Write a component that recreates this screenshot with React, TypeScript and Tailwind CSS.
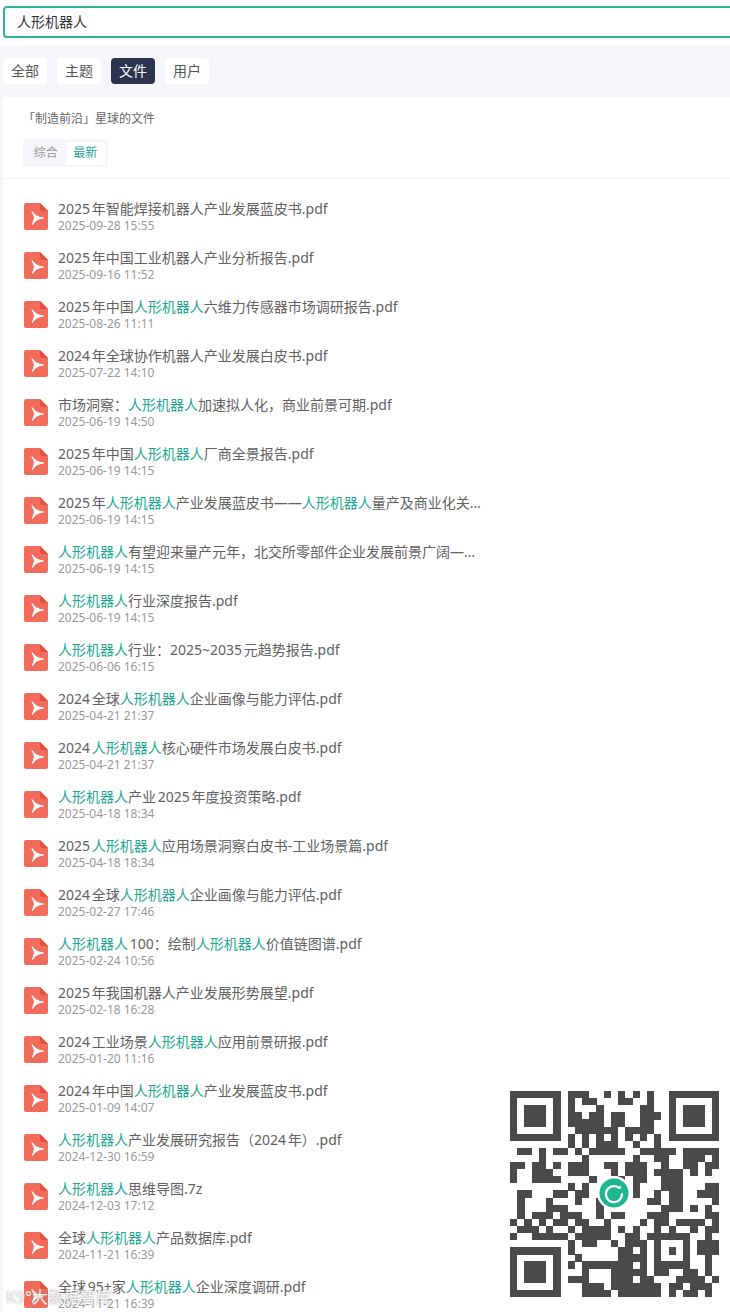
import React from 'react';

const KEYWORD = '人形机器人';

const files = [
  ['2025年智能焊接机器人产业发展蓝皮书.pdf', '2025-09-28 15:55'],
  ['2025年中国工业机器人产业分析报告.pdf', '2025-09-16 11:52'],
  ['2025年中国人形机器人六维力传感器市场调研报告.pdf', '2025-08-26 11:11'],
  ['2024年全球协作机器人产业发展白皮书.pdf', '2025-07-22 14:10'],
  ['市场洞察：人形机器人加速拟人化，商业前景可期.pdf', '2025-06-19 14:50'],
  ['2025年中国人形机器人厂商全景报告.pdf', '2025-06-19 14:15'],
  ['2025年人形机器人产业发展蓝皮书——人形机器人量产及商业化关键挑战.pdf', '2025-06-19 14:15'],
  ['人形机器人有望迎来量产元年，北交所零部件企业发展前景广阔——行业报告.pdf', '2025-06-19 14:15'],
  ['人形机器人行业深度报告.pdf', '2025-06-19 14:15'],
  ['人形机器人行业：2025~2035元趋势报告.pdf', '2025-06-06 16:15'],
  ['2024全球人形机器人企业画像与能力评估.pdf', '2025-04-21 21:37'],
  ['2024人形机器人核心硬件市场发展白皮书.pdf', '2025-04-21 21:37'],
  ['人形机器人产业2025年度投资策略.pdf', '2025-04-18 18:34'],
  ['2025人形机器人应用场景洞察白皮书-工业场景篇.pdf', '2025-04-18 18:34'],
  ['2024全球人形机器人企业画像与能力评估.pdf', '2025-02-27 17:46'],
  ['人形机器人100：绘制人形机器人价值链图谱.pdf', '2025-02-24 10:56'],
  ['2025年我国机器人产业发展形势展望.pdf', '2025-02-18 16:28'],
  ['2024工业场景人形机器人应用前景研报.pdf', '2025-01-20 11:16'],
  ['2024年中国人形机器人产业发展蓝皮书.pdf', '2025-01-09 14:07'],
  ['人形机器人产业发展研究报告（2024年）.pdf', '2024-12-30 16:59'],
  ['人形机器人思维导图.7z', '2024-12-03 17:12'],
  ['全球人形机器人产品数据库.pdf', '2024-11-21 16:39'],
  ['全球95+家人形机器人企业深度调研.pdf', '2024-11-21 16:39'],
];

const QR_ROWS = [
  '#######.###..#.#.#.#..#######',
  '#.....#.#.##...##..#..#.....#',
  '#.###.#.#...#.....##..#.###.#',
  '#.###.#.##.##.##..###.#.###.#',
  '#.###.#.#####.##..##..#.###.#',
  '#.....#..######.####..#.....#',
  '#######.#.#.#.#.#.#.#.#######',
  '........#.#.###..#..#........',
  '.##.#.##.#.#####..#####.#####',
  '....#.....#......#..##..###.#',
  '##.##.#.###..##.###..#..##.##',
  '#..###..###...#.###.####.#.#.',
  '#..####....#...#.##..###.....',
  '........#.#......#...###...##',
  '.##...##.##......#..#.##..###',
  '.#...#...#..#......##.##....#',
  '.#...###....#........###.#.#.',
  '.#.###.###..#.##...###.....##',
  '#.#.#.##.##..#....#.##.####.#',
  '.###.#..#.####.#.#..#.#..#.##',
  '#..#####.#####..##.######..#.',
  '........#.##..#.###.#...#.###',
  '#######.#......##.#.#.#.#.###',
  '#.....#..#.....####.#...#..#.',
  '#.###.#.#.#######.#.#####..#.',
  '#.###.#...#...#####.##..##.#.',
  '#.###.#.###...###.##...####.#',
  '#.....#...###.#######.##.###.',
  '#######...####.######.#.##.#.',
];

function PdfIcon() {
  return (
    <svg width="24" height="27" viewBox="0 0 24 27" className="shrink-0">
      <path d="M2 0H16L24 8V25a2 2 0 0 1-2 2H2a2 2 0 0 1-2-2V2a2 2 0 0 1 2-2Z" fill="#f36b5b" />
      <path d="M16 0L24 8H18a2 2 0 0 1-2-2Z" fill="#e2523f" />
      <path
        d="M8 8.5C9.5 12 10 13 10.5 15C10 17 9 19 8.5 21.5C10.5 18.5 13 16 19.5 15C14 14.5 10.5 12 8 8.5Z"
        fill="#fff"
        stroke="#fff"
        strokeWidth="1"
        strokeLinejoin="round"
      />
    </svg>
  );
}

function Title({ text }: { text: string }) {
  const parts = text.split(KEYWORD);
  return (
    <div className="max-w-[424px] truncate text-sm leading-5 text-[#616161] [text-autospace:normal]">
      {parts.map((part, i) => (
        <React.Fragment key={i}>
          {i > 0 && <span className="text-[#22a98f]">{KEYWORD}</span>}
          {part}
        </React.Fragment>
      ))}
    </div>
  );
}

function QrCode() {
  return (
    <div className="absolute left-[510px] top-[1091px] h-[206px] w-[209px]">
      <svg width="209" height="206" viewBox="0 0 29 29" preserveAspectRatio="none" shapeRendering="crispEdges">
        {QR_ROWS.map((row, y) =>
          row.split('').map((cell, x) =>
            cell === '#' ? <rect key={`${x}-${y}`} x={x} y={y} width="1.02" height="1.02" fill="#4a4a4a" /> : null,
          ),
        )}
      </svg>
      <svg width="34" height="34" viewBox="0 0 34 34" className="absolute left-[87px] top-[85px]">
        <circle cx="17" cy="17" r="17" fill="#fff" />
        <circle cx="17" cy="17" r="14.5" fill="#1fb58f" />
        <path d="M21.8 11.8a8 8 0 1 0 3.1 6.2" fill="none" stroke="#fff" strokeWidth="2.2" strokeLinecap="round" />
        <circle cx="22.8" cy="11.5" r="1.4" fill="#fff" />
      </svg>
    </div>
  );
}

const App: React.FC = () => {
  return (
    <div className="relative h-screen overflow-hidden bg-white font-['Noto_Sans','Noto_Sans_CJK_SC',sans-serif]">
      {/* Search box */}
      <div className="pb-2 pl-[3px] pt-[6px]">
        <div className="-mr-1 flex h-8 items-center rounded border-2 border-[#2bb39b] pl-3 text-sm text-[#333]">
          {KEYWORD}
        </div>
      </div>

      <div className="bg-[#f5f6f9] pl-[3px]">
        {/* Tabs */}
        <div className="flex h-[51px] items-center gap-[10px] pb-[1px]">
          <div className="flex h-[26px] w-11 items-center justify-center rounded bg-white text-sm text-[#555]">全部</div>
          <div className="flex h-[26px] w-11 items-center justify-center rounded bg-white text-sm text-[#555]">主题</div>
          <div className="flex h-[26px] w-11 items-center justify-center rounded bg-[#2e3350] text-sm text-white">文件</div>
          <div className="flex h-[26px] w-11 items-center justify-center rounded bg-white text-sm text-[#555]">用户</div>
        </div>

        <div className="h-[1300px] bg-white">
          {/* Panel header */}
          <div className="h-[82px] border-b border-[#f0f0f0] pl-5 pt-[14px]">
            <div className="text-xs leading-4 text-[#666]">「制造前沿」星球的文件</div>
            <div className="mt-3 flex h-7 w-[85px] items-center rounded-sm bg-[#f5f6f9] p-[3px] text-xs">
              <div className="flex h-[23px] w-10 items-center justify-center text-[#999]">综合</div>
              <div className="flex h-[23px] w-10 items-center justify-center rounded-sm bg-white text-[#22a98f]">最新</div>
            </div>
          </div>

          {/* File list */}
          <div className="flex flex-col gap-[15px] pl-[21px] pt-5">
            {files.map(([title, date], i) => (
              <div key={i} className="flex h-[34px] items-center gap-[10px]">
                <PdfIcon />
                <div className="min-w-0">
                  <Title text={title} />
                  <div className="text-xs leading-[14px] text-[#999]">{date}</div>
                </div>
              </div>
            ))}
          </div>
        </div>
      </div>

      <QrCode />

      {/* Watermark over the last row */}
      <div className="absolute left-[6px] top-[1287px] text-base leading-5 text-white/90 [text-shadow:0_0_2px_#888]">
        K9°大数据智库
      </div>
    </div>
  );
};

export default App;
